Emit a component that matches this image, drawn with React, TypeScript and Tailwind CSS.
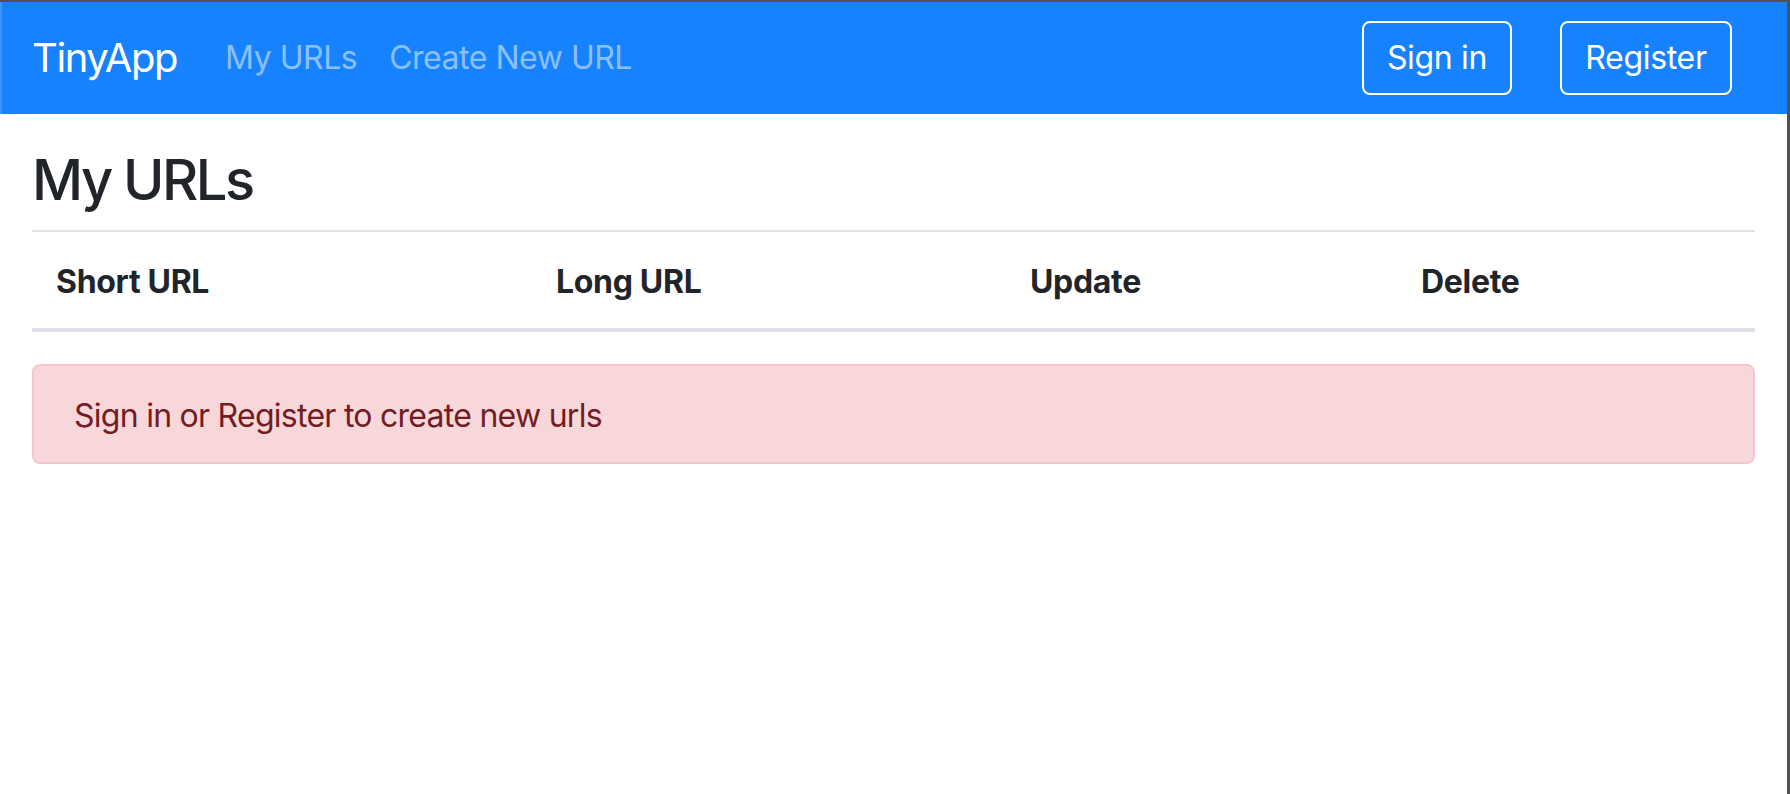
import React from 'react';

const font = { fontFamily: 'Inter, "Noto Sans", sans-serif' };

const columns = [
  { label: 'Short URL', width: 'w-[500px]' },
  { label: 'Long URL', width: 'w-[474px]' },
  { label: 'Update', width: 'w-[391px]' },
  { label: 'Delete', width: 'flex-1' },
];

const Navbar = () => {
  return (
    <nav className="flex items-center h-[112px] bg-[#1782fe] pl-[30px] pr-[55px] border-l-2 border-l-[#3d95fd]">
      <a href="#" className="text-[40px] leading-[60px] tracking-[-0.035em] text-white mr-[32px] py-[10px]">
        TinyApp
      </a>
      <ul className="flex tracking-[-0.03em]">
        <li>
          <a href="#" className="block px-[16px] text-[32px] leading-[48px] text-[#8bc0ff]">My URLs</a>
        </li>
        <li>
          <a href="#" className="block px-[16px] text-[32px] leading-[48px] text-[#8bc0ff]">Create New URL</a>
        </li>
      </ul>
      <div className="ml-auto flex items-center gap-[48px] tracking-[-0.02em]">
        <button className="w-[150px] h-[74px] border-2 border-white rounded-[8px] text-white text-[32px] leading-[48px]">
          Sign in
        </button>
        <button className="w-[172px] h-[74px] border-2 border-white rounded-[8px] text-white text-[32px] leading-[48px]">
          Register
        </button>
      </div>
    </nav>
  );
};

export default function App() {
  return (
    <div className="h-screen border-t-2 border-r-[3px] border-[#4f5256] bg-white text-[#212529]" style={font}>
      <Navbar />
      <main className="px-[32px] pt-[33px] tracking-[-0.02em]">
        <h1 className="text-[56px] leading-[67px] font-medium tracking-[-0.045em] mb-[16px]">My URLs</h1>
        <div className="border-t-2 border-[#dee2e6] border-b-4 mb-[32px]">
          <div className="flex">
            {columns.map((c) => (
              <div key={c.label} className={`${c.width} px-[24px] pt-[26px] pb-[22px] text-[32px] leading-[48px] font-bold`}>
                {c.label}
              </div>
            ))}
          </div>
        </div>
        <div className="bg-[#f8d7da] border-2 border-[#f5c6cb] rounded-[8px] px-[40px] pt-[26px] pb-[22px] text-[32px] leading-[48px] tracking-[-0.023em] text-[#721c24]">
          Sign in or Register to create new urls
        </div>
      </main>
    </div>
  );
}
